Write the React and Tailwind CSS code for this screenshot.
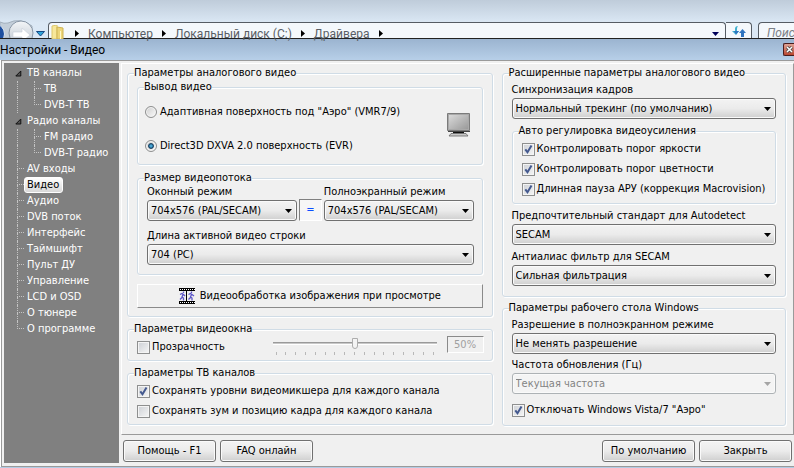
const dots = "border-dotted border-[#c4c4c4]";

const tree = [
  { label: "ТВ каналы", group: true },
  { label: "ТВ", child: true },
  { label: "DVB-T ТВ", child: true, lastChild: true },
  { label: "Радио каналы", group: true },
  { label: "FM радио", child: true },
  { label: "DVB-T радио", child: true, lastChild: true },
  { label: "AV входы" },
  { label: "Видео", selected: true },
  { label: "Аудио" },
  { label: "DVB поток" },
  { label: "Интерфейс" },
  { label: "Таймшифт" },
  { label: "Пульт ДУ" },
  { label: "Управление" },
  { label: "LCD и OSD" },
  { label: "О тюнере" },
  { label: "О программе", last: true },
];

function Branch({ end }) {
  return (
    <span className="flex w-[7px] flex-col">
      <span className={`h-2 border-b border-l ${dots}`} />
      {!end && <span className={`h-2 border-l ${dots}`} />}
    </span>
  );
}

function TreeRow({ item }) {
  return (
    <li className="flex h-4 items-stretch">
      {item.group && (
        <span className="-ml-0.5 flex w-[9px] items-center">
          <svg width="7" height="7" viewBox="0 0 7 7">
            <path d="M5.8 1v5H.8z" fill="#555" stroke="#111" />
          </svg>
        </span>
      )}
      {item.child && <span className={`w-[17px] border-l ${dots}`} />}
      {!item.group && <Branch end={item.last || item.lastChild} />}
      <button
        type="button"
        className={
          item.selected
            ? "rounded-[3px] border border-white bg-linear-to-b from-white to-[#d8d8d8] pr-[3px] pl-0.5 leading-[14px] whitespace-nowrap text-black"
            : "px-[3px] leading-4 whitespace-nowrap text-white"
        }
      >
        {item.label}
      </button>
    </li>
  );
}

function Group({ title, className = "", children }) {
  return (
    <fieldset className="min-w-0 rounded-[3px] border border-[#d0dce6] shadow-[1px_1px_0_#fff,inset_1px_1px_0_#fff]">
      <legend className="ml-1.5 bg-[#f0f0f0] leading-[14px] whitespace-nowrap">{title}</legend>
      <div className={className}>{children}</div>
    </fieldset>
  );
}

function Combo({ id, label, value, disabled, className = "" }) {
  return (
    <div className={`flex min-w-0 flex-col gap-px ${className}`}>
      <label htmlFor={id} className="leading-[14px] whitespace-nowrap">
        {label}
      </label>
      <div className="relative">
        <select
          id={id}
          disabled={disabled}
          className="h-[21px] w-full appearance-none rounded-[3px] border border-[#707070] bg-linear-to-b from-[#f3f3f3] from-0% via-[#ebebeb] via-50% to-[#cfcfcf] pr-5 pl-[3px] leading-[18px] text-black shadow-[inset_0_0_0_1px_#fafafa] disabled:border-[#adb2b5] disabled:bg-[#f4f4f4] disabled:bg-none disabled:text-[#838383] disabled:opacity-100"
        >
          <option>{value}</option>
        </select>
        <svg
          width="7"
          height="4"
          viewBox="0 0 7 4"
          className={`pointer-events-none absolute top-[9px] right-[5px] ${disabled ? "text-[#a5a5a5]" : "text-black"}`}
        >
          <path d="M0 0h7L3.500 4z" fill="currentColor" />
        </svg>
      </div>
    </div>
  );
}

function Check({ label, checked }) {
  return (
    <label className="flex h-4 items-center gap-0.5 whitespace-nowrap">
      <span className="grid">
        <input
          type="checkbox"
          defaultChecked={checked}
          className="peer col-start-1 row-start-1 size-[13px] appearance-none border border-[#8e8f8f] bg-linear-to-br from-[#cdd0d5] to-[#f6f6f6] shadow-[inset_0_0_0_1px_#f4f4f4]"
        />
        <svg
          width="13"
          height="13"
          viewBox="0 0 13 13"
          className="pointer-events-none invisible col-start-1 row-start-1 peer-checked:visible"
        >
          <path d="M3.300 6.300 5.500 9.300 9.500 2.500" fill="none" stroke="#44598f" strokeWidth="2" />
        </svg>
      </span>
      {label}
    </label>
  );
}

function Radio({ label, checked }) {
  return (
    <label className="flex h-4 items-center gap-[3px] whitespace-nowrap">
      <span className="grid place-items-center">
        <input
          type="radio"
          name="output"
          defaultChecked={checked}
          className="peer col-start-1 row-start-1 size-3 appearance-none rounded-full border border-[#8e8f8f] bg-linear-to-br from-[#cfcfcf] to-[#fafafa] shadow-[inset_0_0_0_1px_#f4f4f4]"
        />
        <span className="pointer-events-none invisible col-start-1 row-start-1 size-1.5 rounded-full border border-[#123a5c] bg-radial from-[#5cc0ee] to-[#155a86] peer-checked:visible" />
      </span>
      {label}
    </label>
  );
}

function PushButton({ children }) {
  return (
    <button
      type="button"
      className="h-[22px] w-[93px] rounded-[3px] border border-[#707070] bg-linear-to-b from-[#f3f3f3] from-0% via-[#ebebeb] via-50% to-[#cfcfcf] whitespace-nowrap shadow-[inset_0_0_0_1px_#fafafa]"
    >
      {children}
    </button>
  );
}

function Crumb({ children }) {
  return (
    <>
      <svg width="4" height="7" viewBox="0 0 4 7" className="shrink-0">
        <path d="M0 0v7l4-3.500z" fill="#000" />
      </svg>
      {children && <span className="leading-[14px] whitespace-nowrap">{children}</span>}
    </>
  );
}

function Explorer() {
  return (
    <header className="flex h-[38px] items-end bg-linear-to-b from-[#bfccda] to-[#dbe8f5] to-60% font-[Roboto,'Noto_Sans',sans-serif] text-xs text-[#5a5f66]">
      <svg width="48" height="18" viewBox="0 0 48 18" className="shrink-0">
        <defs>
          <linearGradient id="nav" x2="0" y2="1">
            <stop offset="0" stopColor="#f4f6f8" />
            <stop offset="1" stopColor="#bcc5cf" />
          </linearGradient>
        </defs>
        <path d="M0 2Q4 4 8 3Q20-3 32 6V18H0z" fill="#c3ced9" stroke="#a3b0bd" />
        <circle cx="-6" cy="14" r="10.500" fill="#1d4fa0" stroke="#dfe8f2" />
        <circle cx="21" cy="13" r="12" fill="url(#nav)" stroke="#8896a6" />
        <path d="M13 12h9V8l8 7-6 5h-2v-3h-9z" fill="#fff" stroke="#c7cfd8" strokeWidth=".6" />
        <path d="M36.500 11.500h8L40.500 16z" fill="#2fa4d8" stroke="#164a86" />
      </svg>
      <div className="flex h-4 min-w-0 flex-1 items-center gap-[9px] rounded-t-sm border border-b-0 border-[#555c64] bg-[#f4f8fc] pt-1.5 pl-0.5">
        <svg width="14" height="14" viewBox="0 0 14 14" className="mr-px -mt-1 shrink-0">
          <path d="M1 1l5-1v14H1z" fill="#f7e79a" stroke="#dcc66b" />
          <path d="M6 2l6 1v11H6z" fill="#edd67a" stroke="#cdb252" />
          <path d="M9 6h1v8H9z" fill="#fff7c9" />
        </svg>
        <Crumb>Компьютер</Crumb>
        <Crumb>Локальный диск (C:)</Crumb>
        <Crumb>Драйвера</Crumb>
        <Crumb />
        <svg width="7" height="4" viewBox="0 0 7 4" className="mr-1.5 ml-auto shrink-0">
          <path d="M0 0h7L3.500 4z" fill="#00005a" />
        </svg>
      </div>
      <button type="button" aria-label="Обновить" className="h-4 w-[26px] rounded-tr-sm border-t border-r border-[#555c64] bg-[#f4f8fc] pl-1.5">
        <svg width="14" height="12" viewBox="0 0 14 12">
          <path d="M6 1Q3 1 3 4v2H0l4 4 3-4H5V4q0-2 1-3z" fill="#3fb0cf" />
          <path d="M2 6h5L4 9.500zM10.500 4l3.500 4h-2v4H9V8H7z" fill="#2f74c0" />
        </svg>
      </button>
      <input
        aria-label="Поиск"
        placeholder="Поиск"
        className="ml-1.5 h-4 w-[36px] rounded-tl-sm border-t border-l border-[#555c64] bg-[#f4f8fc] pt-1 pl-2 italic placeholder:text-[#7b8087]"
      />
    </header>
  );
}

function Monitor() {
  return (
    <svg width="24" height="24" viewBox="0 0 24 24">
      <defs>
        <linearGradient id="screen" x2="1" y2="1">
          <stop offset="0" stopColor="#d9d9d9" />
          <stop offset="1" stopColor="#9a9a9a" />
        </linearGradient>
      </defs>
      <path d="M.5.5h22v17H.5z" fill="#a9a9a9" stroke="#7b7b7b" />
      <path d="M2 2h19v14H2z" fill="url(#screen)" />
      <path d="M1 18.500h22" stroke="#444" />
      <path d="M6 19h11v1.500H6z" fill="#111" />
      <path d="M4 20.500h15l2 2.500H2z" fill="#c9c9c9" stroke="#666" strokeWidth=".8" />
    </svg>
  );
}

function Film() {
  return (
    <svg width="16" height="16" viewBox="0 0 16 16">
      <path d="M0 0h16v16H0z" fill="#000" />
      <path d="M0 3h7v10H0zM8 3h8v10H8z" fill="#f0f0f0" />
      <path d="M1 1.500h15M1 14.500h15" stroke="#fff" strokeDasharray="1 1" />
      <path
        d="M4.500 3.500v1.500M1 6.500l2-1 1.500 1L6 8M4 6.500 3 9l1.500 1v2.500M3 9.500 1 11.500M12.500 3.500v1.500M9.500 6.500l2-1 1.500 1L15 8M12.500 6.500 11.500 9l1.500 1v2.500M11.500 9.500l-2 2"
        fill="none"
        stroke="#5b55c8"
        strokeWidth="1.300"
      />
    </svg>
  );
}

export default function App() {
  return (
    <div className="font-['DejaVu_Sans_Condensed','DejaVu_Sans',sans-serif] text-[11px] text-black">
      <Explorer />
      <div className="flex h-[22px] items-center justify-between border-t border-[#222] bg-linear-to-b from-[#9bb4d0] to-[#b7cfe8]">
        <h1 className="font-[Roboto,'Noto_Sans',sans-serif] text-xs">Настройки - Видео</h1>
        <button type="button" aria-label="Закрыть окно" className="flex h-[13px] w-[11px] items-center justify-center rounded-l-xs border border-r-0 border-[#4a1c1c] bg-linear-to-b from-[#dfa293] to-[#b9452f]">
          <svg width="7" height="7" viewBox="0 0 7 7">
            <path d="M1 1l5 5M6 1 1 6" stroke="#444" strokeWidth="3" />
            <path d="M1 1l5 5M6 1 1 6" stroke="#fff" strokeWidth="1.500" />
          </svg>
        </button>
      </div>

      <div className="ml-px flex border border-r-0 border-[#9a9a9a] bg-[#f0f0f0] pt-0.5 pl-0.5">
        <nav className="mb-[3px] w-[115px] shrink-0 bg-[#808080] pt-0.5">
          <ul className="pl-[13px]">
            {tree.map((item) => (
              <TreeRow key={item.label} item={item} />
            ))}
          </ul>
        </nav>

        <div className="ml-0.5 min-w-0 flex-1">
          <main className="grid grid-cols-[365fr_284fr] gap-x-[9px] border-t border-r border-b border-l border-t-white border-r-[#9a9a9a] border-b-[#9a9a9a] border-l-white pt-0.5 pr-[7px] pb-2 pl-[5px]">
            <div className="flex min-w-0 flex-col gap-[5px]">
              <Group title="Параметры аналогового видео" className="px-[9px] pb-2">
                <Group title="Вывод видео" className="flex items-start justify-between pt-2.5 pr-[11px] pb-2.5 pl-[7px]">
                  <div className="flex flex-col gap-[18px]">
                    <Radio label='Адаптивная поверхность под "Аэро" (VMR7/9)' />
                    <Radio label="Direct3D DXVA 2.0 поверхность (EVR)" checked />
                  </div>
                  <div className="pt-[9px]">
                    <Monitor />
                  </div>
                </Group>
                <div className="mt-1.5">
                  <Group title="Размер видеопотока" className="flex flex-col gap-2 pr-2 pb-[9px] pl-[9px]">
                    <div className="flex items-end gap-0.5">
                      <Combo id="win" label="Оконный режим" value="704x576 (PAL/SECAM)" className="flex-1" />
                      <button type="button" className="h-[22px] w-[23px] border border-t-[#808080] border-r-white border-b-white border-l-[#808080] bg-[#f6f6f6] text-[#0a50ff]">
                        =
                      </button>
                      <Combo id="full" label="Полноэкранный режим" value="704x576 (PAL/SECAM)" className="flex-1" />
                    </div>
                    <Combo id="line" label="Длина активной видео строки" value="704 (PC)" />
                  </Group>
                </div>
                <button type="button" className="mt-[9px] flex h-6 w-full items-center justify-center gap-[5px] border border-t-white border-r-[#8a8a8a] border-b-[#8a8a8a] border-l-white">
                  <Film />
                  Видеообработка изображения при просмотре
                </button>
              </Group>

              <Group title="Параметры видеоокна" className="flex items-start justify-between pr-2 pb-[5px] pl-[9px]">
                <div className="pt-[3px]">
                  <Check label="Прозрачность" />
                </div>
                <div className="flex items-start gap-2.5">
                  <div className="w-[164px] pt-0.5">
                    <input
                      type="range"
                      aria-label="Прозрачность"
                      defaultValue="50"
                      disabled
                      className="block h-[11px] w-full appearance-none bg-transparent [&::-webkit-slider-runnable-track]:h-[3px] [&::-webkit-slider-runnable-track]:border-t [&::-webkit-slider-runnable-track]:border-b [&::-webkit-slider-runnable-track]:border-t-[#9a9a9a] [&::-webkit-slider-runnable-track]:border-b-white [&::-webkit-slider-runnable-track]:bg-[#c8c8c8] [&::-webkit-slider-thumb]:-mt-[5px] [&::-webkit-slider-thumb]:h-[11px] [&::-webkit-slider-thumb]:w-1.5 [&::-webkit-slider-thumb]:appearance-none [&::-webkit-slider-thumb]:rounded-b-[3px] [&::-webkit-slider-thumb]:border [&::-webkit-slider-thumb]:border-[#adadad] [&::-webkit-slider-thumb]:bg-[#f4f4f4]"
                    />
                    <div className="mt-[3px] flex justify-between px-[3px]">
                      {Array.from({ length: 17 }, (_, i) => (
                        <span key={i} className="h-[3px] w-px bg-[#b8b8b8]" />
                      ))}
                    </div>
                  </div>
                  <input
                    aria-label="Уровень прозрачности"
                    value="50%"
                    readOnly
                    disabled
                    className="h-[17px] w-[37px] border border-t-[#8a8a8a] border-r-white border-b-white border-l-[#8a8a8a] text-center text-[#a0a0a0]"
                  />
                </div>
              </Group>

              <Group title="Параметры ТВ каналов" className="flex flex-col gap-1 pt-[3px] pb-[5px] pl-[9px]">
                <Check label="Сохранять уровни видеомикшера для каждого канала" checked />
                <Check label="Сохранять зум и позицию кадра для каждого канала" />
              </Group>
            </div>

            <div className="flex min-w-0 flex-col gap-1">
              <Group title="Расширенные параметры аналогового видео" className="flex flex-col gap-[5px] px-[9px] pt-[3px] pb-2.5">
                <Combo id="sync" label="Синхронизация кадров" value="Нормальный трекинг (по умолчанию)" />
                <Group title="Авто регулировка видеоусиления" className="flex flex-col gap-1 pt-[3px] pb-1.5 pl-[9px]">
                  <Check label="Контролировать порог яркости" checked />
                  <Check label="Контролировать порог цветности" checked />
                  <Check label="Длинная пауза АРУ (коррекция Macrovision)" checked />
                </Group>
                <Combo id="std" label="Предпочтительный стандарт для Autodetect" value="SECAM" />
                <Combo id="filter" label="Антиалиас фильтр для SECAM" value="Сильная фильтрация" />
              </Group>

              <Group title="Параметры рабочего стола Windows" className="flex flex-col gap-1 px-[9px] pt-[3px] pb-[7px]">
                <Combo id="res" label="Разрешение в полноэкранном режиме" value="Не менять разрешение" />
                <Combo id="freq" label="Частота обновления (Гц)" value="Текущая частота" disabled />
                <div className="pt-1">
                  <Check label='Отключать Windows Vista/7 "Аэро"' checked />
                </div>
              </Group>
            </div>
          </main>

          <footer className="flex justify-between pt-[5px] pr-0.5 pb-1 pl-0.5">
            <div className="flex gap-1">
              <PushButton>Помощь - F1</PushButton>
              <PushButton>FAQ онлайн</PushButton>
            </div>
            <div className="flex gap-1">
              <PushButton>По умолчанию</PushButton>
              <PushButton>Закрыть</PushButton>
            </div>
          </footer>
        </div>
      </div>
      <div className="h-0.5 bg-[#b3cbe4]" />
    </div>
  );
}
